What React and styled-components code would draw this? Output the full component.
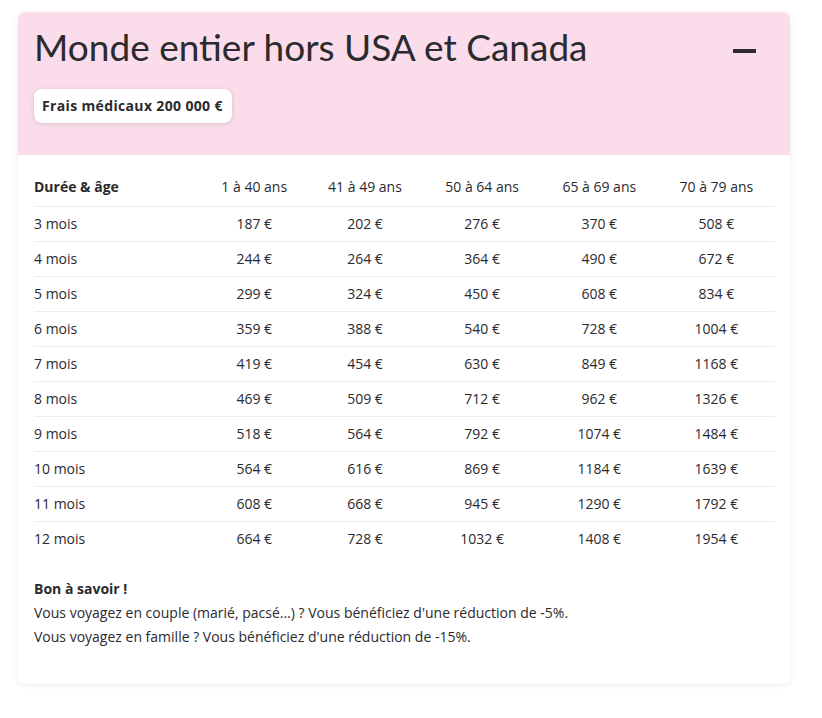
import styled, { createGlobalStyle } from "styled-components";

const GlobalStyle = createGlobalStyle`
  body {
    margin: 0;
    background: #fff;
    font-family: "Open Sans", "Noto Sans", sans-serif;
    color: #2b2a2e;
  }
`;

const Page = styled.div`
  padding: 12px 32px 32px 18px;
`;

const Card = styled.section`
  width: 772px;
  border-radius: 8px;
  background: #fff;
  box-shadow: 0 1px 6px rgba(0, 0, 0, 0.08);
  overflow: hidden;
`;

const Header = styled.header`
  background: #fbdcea;
  height: 143px;
  box-sizing: border-box;
  padding: 14px 34px 0 16px;
`;

const TitleRow = styled.div`
  display: flex;
  justify-content: space-between;
  align-items: center;
`;

const Title = styled.h2`
  margin: 0;
  font-family: "Lato", sans-serif;
  font-size: 37px;
  font-weight: 400;
  line-height: 42px;
`;

const Minus = styled.span`
  display: block;
  width: 23px;
  height: 4px;
  background: #2b2a2e;
  margin-top: 8px;
`;

const Badge = styled.div`
  display: inline-block;
  margin-top: 21px;
  padding: 0 9px 0 8px;
  height: 34px;
  line-height: 34px;
  background: #fff;
  border-radius: 8px;
  box-shadow: 0 1px 4px rgba(0, 0, 0, 0.15);
  font-size: 14px;
  font-weight: 700;
  letter-spacing: 0.35px;
`;

const Body = styled.div`
  padding: 11px 15px 35px 16px;
`;

const Table = styled.table`
  width: 741px;
  border-collapse: collapse;
  font-size: 14px;

  th,
  td {
    height: 32px;
    padding: 0 0 2px;
    text-align: center;
    font-weight: 400;
  }
  thead th {
    height: 40px;
    padding: 0;
  }
  th:first-child,
  td:first-child {
    text-align: left;
    width: 168px;
  }
  thead th:first-child {
    font-weight: 700;
  }
  tbody tr {
    border-top: 1px solid #ececec;
  }
`;

const Note = styled.div`
  margin-top: 21px;
  font-size: 14px;
  line-height: 24px;

  strong {
    font-weight: 700;
  }
  p {
    margin: 0;
  }
`;

const ages = ["1 à 40 ans", "41 à 49 ans", "50 à 64 ans", "65 à 69 ans", "70 à 79 ans"];

const rows = [
  ["3 mois", 187, 202, 276, 370, 508],
  ["4 mois", 244, 264, 364, 490, 672],
  ["5 mois", 299, 324, 450, 608, 834],
  ["6 mois", 359, 388, 540, 728, 1004],
  ["7 mois", 419, 454, 630, 849, 1168],
  ["8 mois", 469, 509, 712, 962, 1326],
  ["9 mois", 518, 564, 792, 1074, 1484],
  ["10 mois", 564, 616, 869, 1184, 1639],
  ["11 mois", 608, 668, 945, 1290, 1792],
  ["12 mois", 664, 728, 1032, 1408, 1954],
];

const App = () => {
  return (
    <Page>
      <GlobalStyle />
      <Card>
        <Header>
          <TitleRow>
            <Title>Monde entier hors USA et Canada</Title>
            <Minus />
          </TitleRow>
          <Badge>Frais médicaux 200 000 €</Badge>
        </Header>
        <Body>
          <Table>
            <thead>
              <tr>
                <th>Durée &amp; âge</th>
                {ages.map((a) => (
                  <th key={a}>{a}</th>
                ))}
              </tr>
            </thead>
            <tbody>
              {rows.map(([label, ...prices]) => (
                <tr key={label}>
                  <td>{label}</td>
                  {prices.map((p, i) => (
                    <td key={i}>{p} €</td>
                  ))}
                </tr>
              ))}
            </tbody>
          </Table>
          <Note>
            <strong>Bon à savoir !</strong>
            <p>Vous voyagez en couple (marié, pacsé...) ? Vous bénéficiez d'une réduction de -5%.</p>
            <p>Vous voyagez en famille ? Vous bénéficiez d'une réduction de -15%.</p>
          </Note>
        </Body>
      </Card>
    </Page>
  );
};

export default App;
